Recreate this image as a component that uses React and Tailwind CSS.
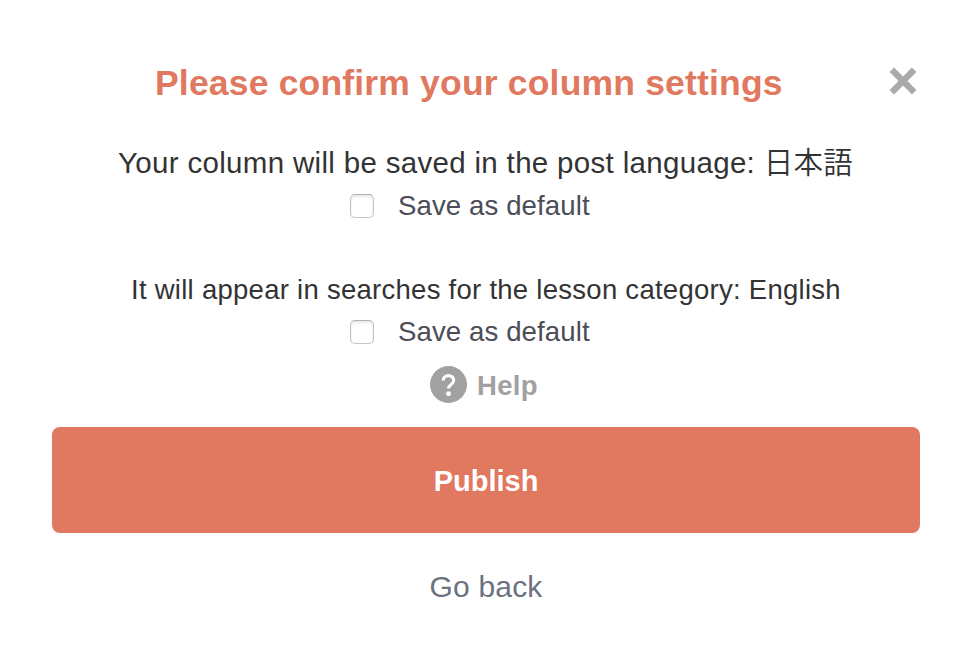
import React from "react";

function Check({ label }) {
  return (
    <label className="flex h-[42px] items-center pl-[350px] text-[27.6px] tracking-[0.1px] text-[#4b4d57]">
      <input type="checkbox" className="mr-6 h-6 w-6 appearance-none rounded-[5px] border border-[#c4c4c4] border-t-[#b2b2b2] bg-white shadow-[inset_0_2px_3px_#e8e8e8]" />
      <span className="whitespace-nowrap">{label}</span>
    </label>
  );
}

export default function App() {
  return (
    <main className="flex h-[658px] w-[974px] flex-col overflow-hidden bg-white pt-[52px] font-['Liberation_Sans','Noto_Sans_CJK_JP',sans-serif] text-[#333]">
      <header className="flex h-[60px] items-center pl-[155px]">
        <h1 className="w-[734px] whitespace-nowrap pt-[4px] text-[35.5px] font-bold tracking-[0.18px] text-[#e17860]">Please confirm your column settings</h1>
        <button aria-label="Close" className="-mt-[2px] h-7 w-7">
          <svg viewBox="0 0 28 28" className="h-7 w-7"><path d="M2.800 2.800 25.200 25.200M25.200 2.800 2.800 25.200" stroke="#aaa" strokeWidth="6.4" /></svg>
        </button>
      </header>
      <p className="mt-[30px] flex h-[42px] items-center whitespace-pre pl-[118px] text-[29.5px] tracking-[0.32px]">
        <span>{"Your column will be saved in the post language: "}</span>
        <span lang="ja" className="pb-[6px] font-['Noto_Sans_CJK_JP',sans-serif] text-[29.5px] leading-[42px] font-[350]">日本語</span>
      </p>
      <div className="mt-px">
        <Check label="Save as default" />
      </div>
      <p className="mt-[42px] flex h-[42px] items-center whitespace-nowrap pl-[131px] text-[27.5px] tracking-[0.27px]">It will appear in searches for the lesson category: English</p>
      <Check label="Save as default" />
      <div className="mt-[10px] flex h-[42px] items-center pl-[430px] text-[27.5px] font-bold tracking-[0.3px] text-[#a1a1a1]">
        <svg viewBox="0 0 36 36" className="mr-[11px] h-[37px] w-[37px]"><circle cx="18" cy="18" r="18" fill="#a1a1a1" /><path d="M12.800 14.200C12.800 7.800 23 7.800 23 14c0 4.200-5 3.800-5 8" fill="none" stroke="white" strokeWidth="3" /><circle cx="18" cy="27" r="2.400" fill="white" /></svg>
        <span className="-ml-px pt-[3px]">Help</span>
      </div>
      <button className="ml-[52px] mt-[22px] h-[106px] w-[868px] shrink-0 rounded-lg bg-[#e17860] pt-[3px] text-[29px] font-bold text-white">Publish</button>
      <button className="mt-[31px] h-[42px] w-[972px] text-[30px] tracking-[0.2px] text-[#6b7280]">Go back</button>
    </main>
  );
}
